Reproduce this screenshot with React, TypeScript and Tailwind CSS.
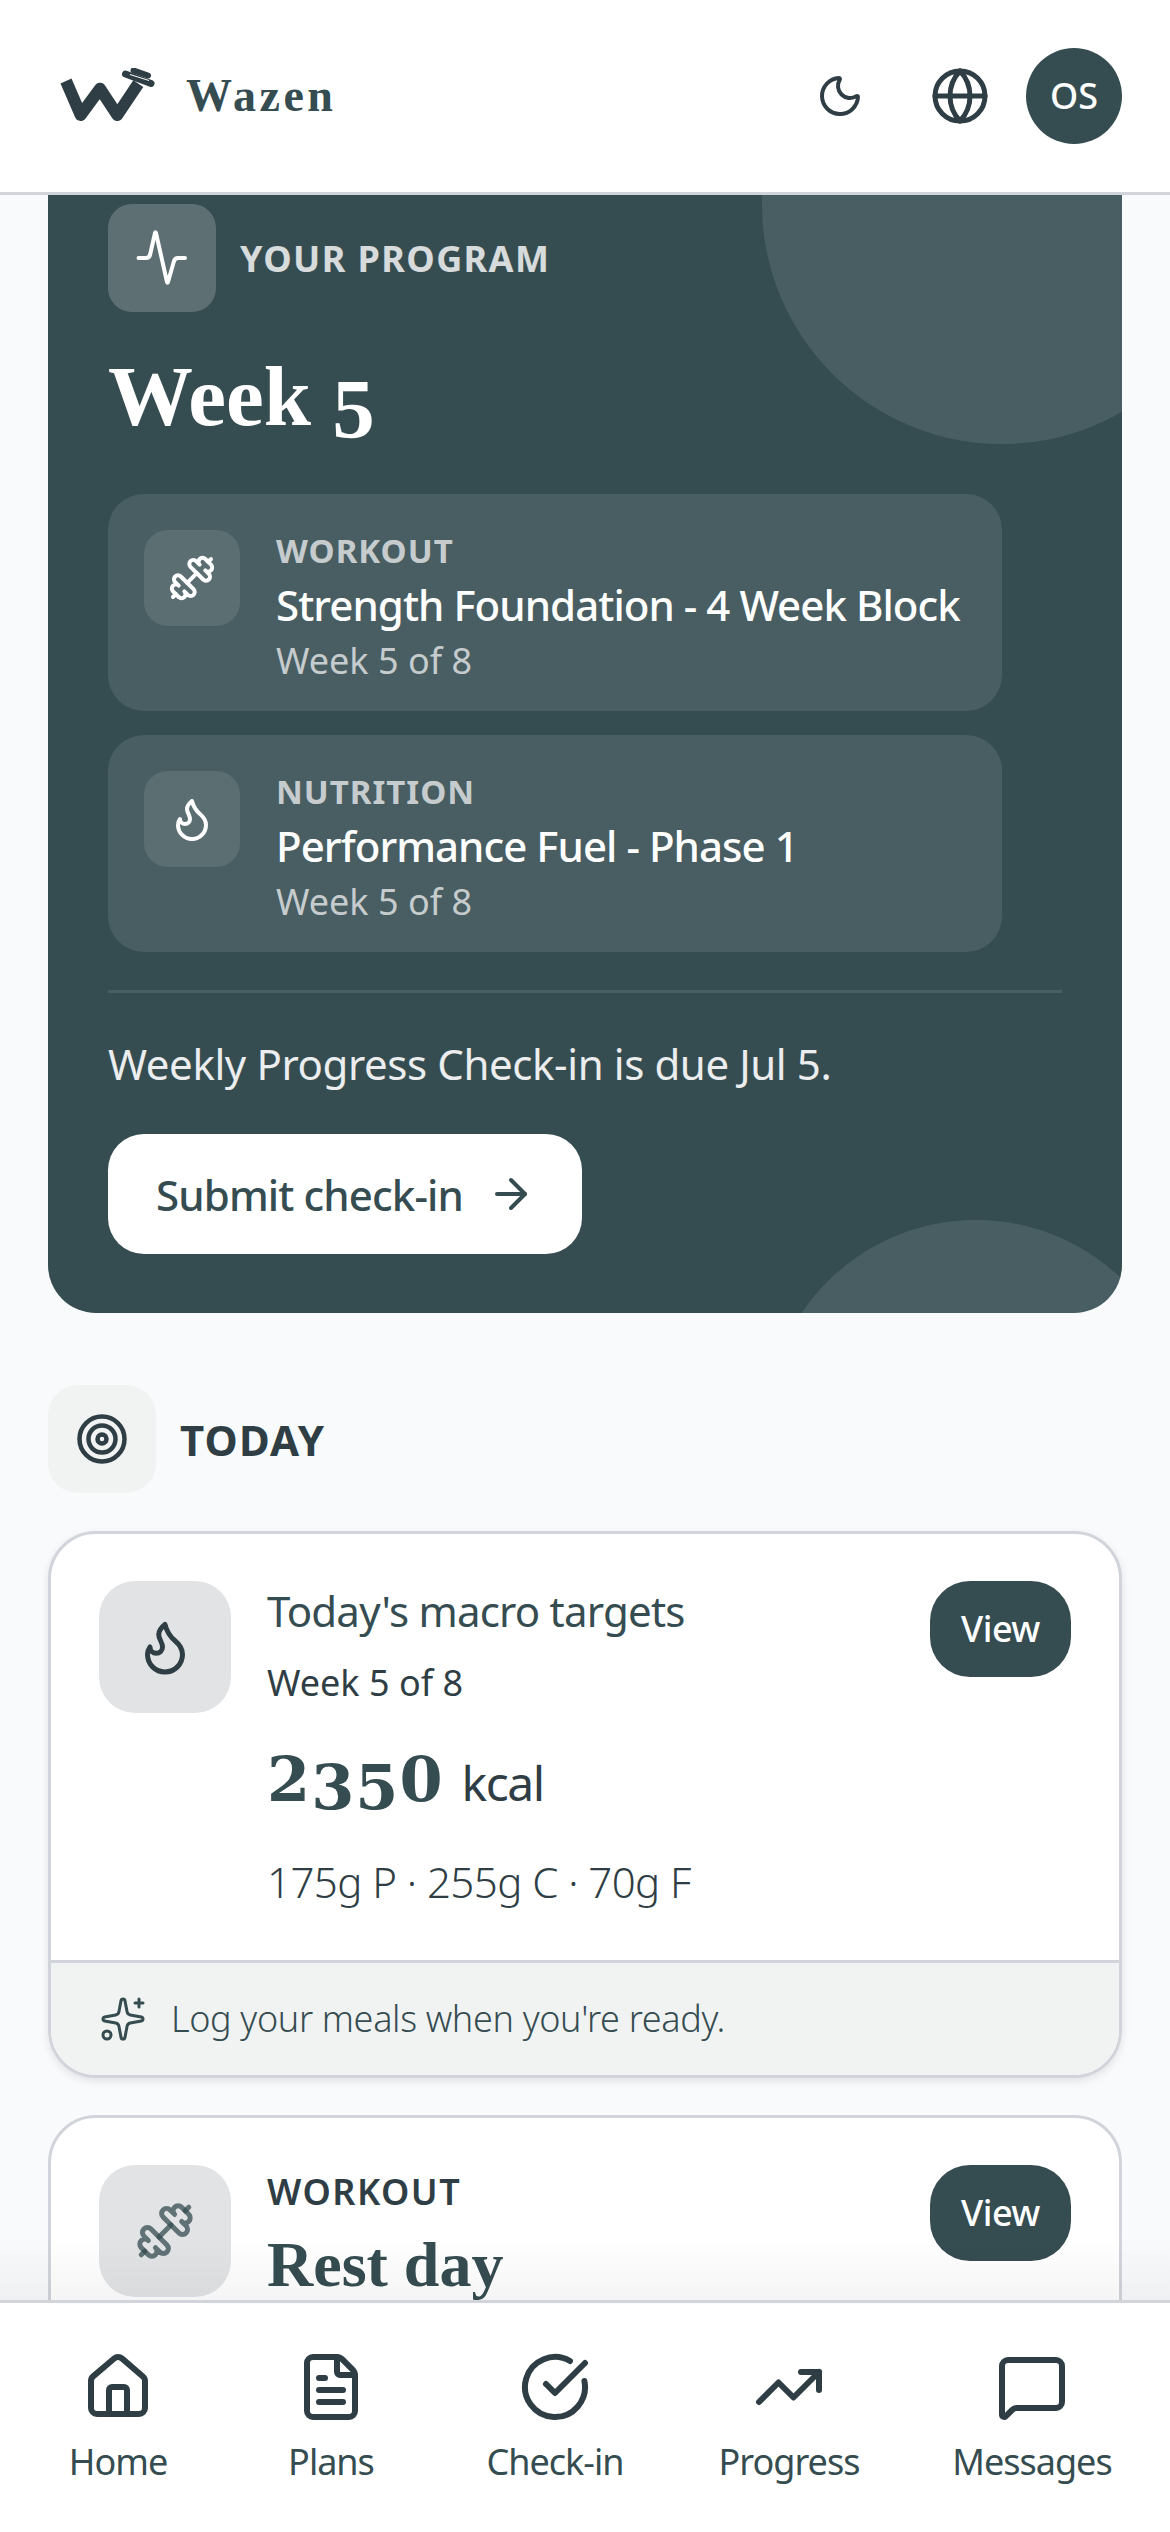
import {
  ArrowRight,
  CircleCheckBig,
  Dumbbell,
  FileText,
  Flame,
  Globe,
  House,
  MessageSquare,
  Moon,
  Sparkles,
  Target,
  TrendingUp,
} from "lucide-react"

const sans = "font-['Noto_Sans',sans-serif]"
const serif = "font-['Liberation_Serif',serif]"

const programs = [
  { id: "workout", label: "WORKOUT", title: "Strength Foundation - 4 Week Block", icon: Dumbbell },
  { id: "nutrition", label: "NUTRITION", title: "Performance Fuel - Phase 1", icon: Flame },
]

const tabs = [
  { id: "home", label: "Home", icon: House },
  { id: "plans", label: "Plans", icon: FileText },
  { id: "checkin", label: "Check-in", icon: CircleCheckBig },
  { id: "progress", label: "Progress", icon: TrendingUp },
  { id: "messages", label: "Messages", icon: MessageSquare },
]

function Logo() {
  return (
    <svg width="96" height="56" viewBox="0 0 96 56" fill="none" className="shrink-0">
      <path
        d="M6 13 L20.7 47 L40 20.7 L57.3 47 L78.3 15.7"
        stroke="#2f3e44"
        strokeWidth="12"
        strokeLinejoin="round"
      />
      <path d="M65.5 6 L91 15.5" stroke="#2f3e44" strokeWidth="7" strokeLinecap="round" />
      <path d="M73.5 2.5 L88 7.5" stroke="#2f3e44" strokeWidth="6" strokeLinecap="round" />
      <path d="M70 6.5 L89 12.5" stroke="#ffffff" strokeWidth="1" />
    </svg>
  )
}

function Pulse() {
  return (
    <svg width="52" height="58" viewBox="0 0 52 58" fill="none" stroke="#ffffff" strokeWidth="4" strokeLinecap="round" strokeLinejoin="round">
      <path d="M2.5 29 H10 Q13 29 14 26 L19 4 Q19.5 2.5 20 4 L31 53 Q31.5 54.5 32 53 L38 32 Q39 29 42 29 H49" />
    </svg>
  )
}

export default function App() {
  return (
    <div className={`flex h-[2532px] w-[1170px] flex-col overflow-hidden bg-[#f9fafb] text-[#2f3e44] ${sans}`}>
      {/* Top bar */}
      <header className="z-10 flex h-[195px] shrink-0 items-center justify-between border-b-[3px] border-[#d1d5db] bg-white pl-[60px] pr-[48px]">
        <div className="flex items-center gap-[30px]">
          <Logo />
          <span className={`text-[46px] leading-none font-bold tracking-[3.5px] text-[#354c50] ${serif}`}>Wazen</span>
        </div>
        <div className="flex items-center">
          <Moon size={48} strokeWidth={2} className="mr-[66px]" />
          <Globe size={60} strokeWidth={2} className="mr-[36px]" />
          <div className="flex h-[96px] w-[96px] items-center justify-center rounded-full bg-[#354c50] text-[36px] font-medium text-white">
            OS
          </div>
        </div>
      </header>

      {/* Scrolled content */}
      <main className="relative min-h-0 flex-1 overflow-hidden">
        <div className="mt-[-51px] flex flex-col px-[48px]">
          <section className="relative overflow-hidden rounded-[48px] bg-[#354c50] px-[60px] pt-[60px] pb-[59px]">
            <div className="absolute right-[-120px] top-[-180px] h-[480px] w-[480px] rounded-full bg-white/10" />
            <div className="absolute bottom-[-327px] right-[-64px] h-[420px] w-[420px] rounded-full bg-white/10" />

            <div className="relative">
              <div className="flex items-center gap-[24px]">
                <div className="flex h-[108px] w-[108px] items-center justify-center rounded-[24px] bg-white/20">
                  <Pulse />
                </div>
                <span className="mt-[2px] text-[36px] font-bold tracking-[1.4px] text-white/80">YOUR PROGRAM</span>
              </div>

              <h1 className={`mt-[30px] h-[108px] text-[85px] leading-[108px] font-bold text-white ${serif}`}>
                Week <span className="align-[-13px]">5</span>
              </h1>

              <div className="mt-[44px] flex w-[894px] flex-col gap-[24px]">
                {programs.map((p) => (
                  <div key={p.id} className="flex h-[217px] gap-[36px] rounded-[36px] bg-white/10 px-[36px] pt-[35px]">
                    <div className="mt-[1px] flex h-[96px] w-[96px] shrink-0 items-center justify-center rounded-[24px] bg-white/10">
                      <p.icon size={48} strokeWidth={2} className="text-white" />
                    </div>
                    <div className="flex flex-col">
                      <span className="text-[33px] leading-[44px] font-bold tracking-[1px] text-white/70">{p.label}</span>
                      <span className="mt-[2px] text-[42px] leading-[60px] font-medium tracking-[-0.95px] whitespace-nowrap text-white">
                        {p.title}
                      </span>
                      <span className="mt-[2px] text-[36px] leading-[48px] text-white/70">Week 5 of 8</span>
                    </div>
                  </div>
                ))}
              </div>

              <div className="mt-[38px] h-[3px] w-full bg-white/10" />
              <p className="mt-[41px] text-[42px] leading-[60px] tracking-[-0.4px] text-white/90">
                Weekly Progress Check-in is due Jul 5.
              </p>
              <button className="mt-[40px] flex h-[120px] w-[474px] items-center gap-[24px] rounded-[36px] bg-white pl-[48px] text-[42px] font-medium tracking-[-0.86px] text-[#354c50]">
                Submit check-in
                <ArrowRight size={48} strokeWidth={2} />
              </button>
            </div>
          </section>

          {/* Today */}
          <div className="mt-[72px] flex items-center gap-[24px]">
            <div className="flex h-[108px] w-[108px] items-center justify-center rounded-[30px] bg-[#f1f3f3]">
              <Target size={54} strokeWidth={2} />
            </div>
            <span className="text-[42px] font-bold tracking-[1.2px]">TODAY</span>
          </div>

          <article className="mt-[38px] overflow-hidden rounded-[48px] border-[3px] border-[#d1d5db] bg-white shadow-[0_3px_9px_rgba(0,0,0,0.1)]">
            <div className="flex h-[426px] items-start gap-[36px] px-[48px] pt-[47px]">
              <div className="flex h-[132px] w-[132px] shrink-0 items-center justify-center rounded-[36px] bg-[#e1e3e5]">
                <Flame size={60} strokeWidth={2} />
              </div>
              <div className="min-w-0 flex-1">
                <h3 className="text-[42px] leading-[60px] tracking-[-0.77px] text-[#354c50]">Today's macro targets</h3>
                <p className="mt-[18px] text-[36px] leading-[48px]">Week 5 of 8</p>
                <p className="mt-[25px] flex h-[96px] items-baseline gap-[18px]">
                  <span className="font-['DejaVu_Serif',serif] text-[62px] leading-[96px] font-bold tracking-[1px] text-[#354c50]">
                    2<span className="align-[-8px]">35</span>0
                  </span>
                  <span className="text-[48px] tracking-[-1.5px]">kcal</span>
                </p>
                <p className="mt-[24px] text-[42px] leading-[60px] font-light tracking-[-0.55px]">175g P · 255g C · 70g F</p>
              </div>
              <button className="flex h-[96px] w-[141px] items-center justify-center rounded-[40px] bg-[#354c50] text-[36px] font-medium tracking-[-0.5px] text-white">
                View
              </button>
            </div>
            <div className="flex h-[115px] items-center gap-[24px] border-t-[3px] border-[#d1d5db] bg-[#f1f3f3] px-[48px] text-[#354c50]">
              <Sparkles size={48} strokeWidth={1.5} />
              <span className="text-[36px] font-light tracking-[-0.34px]">Log your meals when you're ready.</span>
            </div>
          </article>

          <article className="mt-[37px] rounded-[48px] border-[3px] border-[#d1d5db] bg-white">
            <div className="flex items-start gap-[36px] px-[48px] pt-[47px]">
              <div className="flex h-[132px] w-[132px] shrink-0 items-center justify-center rounded-[36px] bg-[#e1e3e5]">
                <Dumbbell size={60} strokeWidth={2} strokeOpacity={0.75} className="text-[#354c50]" />
              </div>
              <div className="min-w-0 flex-1">
                <p className="text-[36px] leading-[54px] font-semibold tracking-[1.5px]">WORKOUT</p>
                <h3 className={`mt-[10px] text-[64px] leading-[72px] font-bold text-[#354c50] ${serif}`}>Rest day</h3>
              </div>
              <button className="flex h-[96px] w-[141px] items-center justify-center rounded-[40px] bg-[#354c50] text-[36px] font-medium tracking-[-0.5px] text-white">
                View
              </button>
            </div>
            <div className="h-[300px]" />
          </article>
        </div>
        <div className="pointer-events-none absolute inset-x-0 bottom-0 h-[64px] bg-gradient-to-b from-transparent to-black/[0.04]" />
      </main>

      {/* Bottom tabs */}
      <nav className="z-10 grid h-[232px] shrink-0 grid-cols-[236px_190px_258px_210px_276px] items-start border-t-[3px] border-[#d1d5db] bg-white pt-[48px]">
        {tabs.map((t) => (
          <div key={t.id} className="flex flex-col items-center gap-[15px]">
            <t.icon size={72} strokeWidth={2} />
            <span className="text-[36px] leading-[48px] tracking-[-1px] text-[#354c50]">{t.label}</span>
          </div>
        ))}
      </nav>
    </div>
  )
}
